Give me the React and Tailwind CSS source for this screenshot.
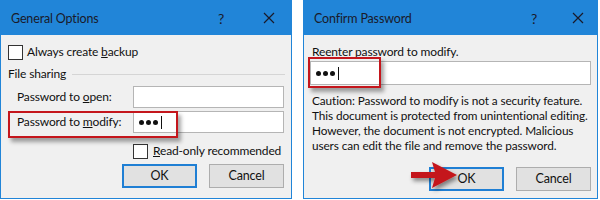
import React from 'react';

const font = { fontFamily: 'Lato, "Liberation Sans", sans-serif' };

const TitleBar = ({ title, qx, xx }) => (
    <div className="relative h-[34px] bg-[#2185d8] text-[#1a1a2a]">
        <span className="absolute left-[10px] top-[9px] text-[12.5px] whitespace-nowrap">{title}</span>
        <span className={`absolute top-[7px] text-[14px] ${qx}`}>?</span>
        <svg className={`absolute top-[11px] ${xx}`} width="12" height="12" viewBox="0 0 12 12">
            <path d="M1 1 L11 11 M11 1 L1 11" stroke="#1a1a2a" strokeWidth="1.2" fill="none" />
        </svg>
    </div>
);

const Checkbox = () => (
    <span className="inline-block w-[15px] h-[15px] border border-[#333] bg-white shrink-0" />
);

const Button = ({ children, primary }) => (
    <div
        className={`flex items-center justify-center h-[24px] w-[75px] text-[12.5px] text-[#111] bg-[#e1e1e1] ${
            primary ? 'border-2 border-[#1f7fd4]' : 'border border-[#adadad]'
        }`}
    >
        {children}
    </div>
);

const Dots = () => (
    <span className="flex items-center gap-[2px] pl-[5px] h-full">
        <span className="w-[5px] h-[5px] rounded-full bg-[#111]" />
        <span className="w-[5px] h-[5px] rounded-full bg-[#111]" />
        <span className="w-[5px] h-[5px] rounded-full bg-[#111]" />
        <span className="w-[1px] h-[13px] bg-[#111] ml-[1px]" />
    </span>
);

const Highlight = ({ cls }) => (
    <div className={`absolute border-2 border-[#c4161c] shadow-[3px_4px_4px_rgba(0,0,0,0.35)] ${cls}`} />
);

const GeneralOptions = () => (
    <div className="relative w-[292px] h-[199px] border border-[#2185d8] bg-[#f0f0f0] text-[12px] tracking-[-0.15px] text-[#111] whitespace-nowrap">
        <TitleBar title="General Options" qx="left-[217px]" xx="left-[262px]" />
        <div className="flex items-center gap-[4px] pl-[7px] mt-[9px] h-[16px]">
            <Checkbox />
            <span>
                Always create <u>b</u>ackup
            </span>
        </div>
        <div className="flex items-center gap-[6px] pl-[7px] pr-[6px] mt-[6px] h-[16px]">
            <span>File sharing</span>
            <span className="flex-1 h-px bg-[#d5d5d5]" />
        </div>
        <div className="flex items-center pl-[16px] pr-[7px] mt-[4px]">
            <span className="w-[116px]">
                Password to <u>o</u>pen:
            </span>
            <div className="flex-1 h-[22px] bg-white border border-[#b5b5b5]" />
        </div>
        <div className="flex items-center pl-[16px] pr-[7px] mt-[3px]">
            <span className="w-[116px]">
                Password to <u>m</u>odify:
            </span>
            <div className="flex-1 h-[22px] bg-white border border-[#b5b5b5]">
                <Dots />
            </div>
        </div>
        <div className="flex items-center gap-[5px] pl-[132px] mt-[10px] h-[16px]">
            <Checkbox />
            <span>
                <u>R</u>ead-only recommended
            </span>
        </div>
        <div className="flex justify-end gap-[12px] pr-[7px] mt-[5px]">
            <Button primary>OK</Button>
            <Button>Cancel</Button>
        </div>
        <Highlight cls="left-[7px] top-[110px] w-[170px] h-[27px]" />
    </div>
);

const ConfirmPassword = () => (
    <div className="relative w-[295px] h-[199px] border border-[#2185d8] bg-[#f0f0f0] text-[12px] tracking-[-0.15px] text-[#111] whitespace-nowrap">
        <TitleBar title="Confirm Password" qx="left-[227px]" xx="left-[268px]" />
        <div className="pl-[8px] mt-[9px] leading-[15px]">
            <u>R</u>eenter password to modify.
        </div>
        <div className="mx-[6px] mt-[2px] h-[24px] bg-white border border-[#b5b5b5]">
            <Dots />
        </div>
        <p className="px-[8px] mt-[8px] leading-[15px] text-[11.8px] tracking-[-0.1px]">
            Caution: Password to modify is not a security feature.
            <br />
            This document is protected from unintentional editing.
            <br />
            However, the document is not encrypted. Malicious
            <br />
            users can edit the file and remove the password.
        </p>
        <div className="flex justify-end gap-[12px] pr-[6px] mt-[14px]">
            <Button primary>OK</Button>
            <Button>Cancel</Button>
        </div>
        <Highlight cls="left-[4px] top-[56px] w-[73px] h-[31px]" />
        <svg className="absolute left-[104px] top-[158px]" width="58" height="36" viewBox="0 0 58 36">
            <defs>
                <filter id="sh" x="-20%" y="-20%" width="150%" height="160%">
                    <feDropShadow dx="2" dy="3" stdDeviation="2" floodColor="#000" floodOpacity="0.45" />
                </filter>
            </defs>
            <path d="M3 13 L27 13 L24 3 L49 16 L24 29 L27 19 L3 19 Z" fill="#c4161c" filter="url(#sh)" />
        </svg>
    </div>
);

const App = () => {
    return (
        <div className="flex gap-[11px] w-[600px] h-[200px] bg-white" style={font}>
            <GeneralOptions />
            <ConfirmPassword />
        </div>
    );
};

export default App;
